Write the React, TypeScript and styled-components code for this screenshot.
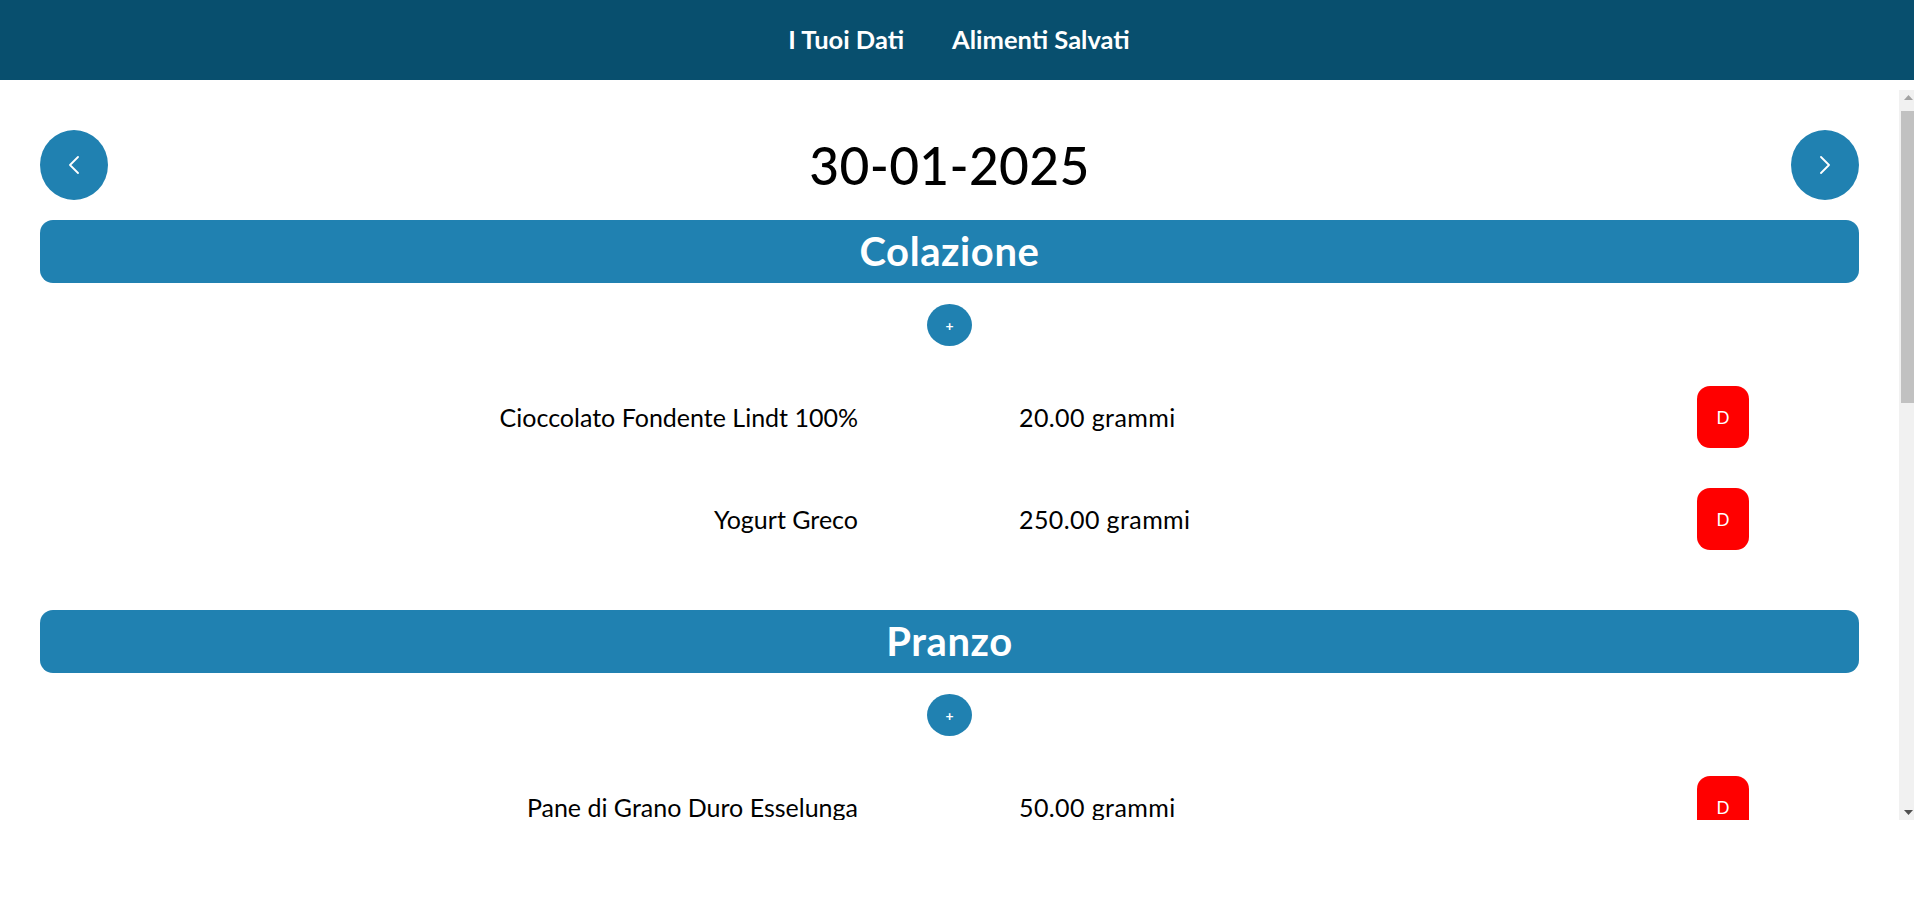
import React from "react";
import styled, { createGlobalStyle } from "styled-components";

const GlobalStyle = createGlobalStyle`
  html, body {
    margin: 0;
    padding: 0;
    background: #ffffff;
    font-family: "Lato", "Open Sans", sans-serif;
    color: #000000;
  }
  * { box-sizing: border-box; }
`;

const Page = styled.div`
  display: flex;
  flex-direction: column;
  width: 100%;
`;

const TopBar = styled.nav`
  height: 80px;
  background: #084f6e;
  display: flex;
  justify-content: center;
  align-items: center;
  gap: 48px;
  padding-left: 4px;
`;

const NavLink = styled.a`
  color: #ffffff;
  font-family: "Lato", sans-serif;
  font-weight: 700;
  font-size: 25.5px;
  text-decoration: none;
  cursor: pointer;
  padding-bottom: 2px;
`;

const Viewport = styled.div`
  margin-top: 10px;
  height: 730px;
  display: flex;
`;

const Scroller = styled.main`
  flex: 1;
  min-width: 0;
  overflow-y: auto;
  padding: 40px 40px 90px;
  scrollbar-width: none;
  &::-webkit-scrollbar {
    display: none;
  }
`;

const ScrollTrack = styled.div`
  width: 15px;
  flex-shrink: 0;
  background: #f1f1f1;
  display: flex;
  flex-direction: column;
`;

const ScrollArrow = styled.div`
  height: 15px;
  display: flex;
  align-items: center;
  justify-content: flex-end;
  padding-right: 1px;
`;

const ScrollThumb = styled.div`
  height: 292px;
  margin-top: 6px;
  margin-left: 2px;
  background: #c1c1c1;
`;

const ScrollSpacer = styled.div`
  flex: 1;
`;

const DateRow = styled.div`
  display: flex;
  align-items: center;
  justify-content: space-between;
  height: 70px;
`;

const RoundNav = styled.button`
  width: 68px;
  height: 70px;
  border-radius: 50%;
  border: none;
  background: #2081b1;
  display: flex;
  align-items: center;
  justify-content: center;
  padding: 0;
  cursor: pointer;
`;

const DateTitle = styled.h1`
  margin: 0;
  font-family: "Lato", sans-serif;
  font-weight: 500;
  font-size: 51.5px;
  letter-spacing: 0.3px;
`;

const Section = styled.section<{ $first?: boolean }>`
  display: flex;
  flex-direction: column;
  align-items: stretch;
  margin-top: ${(p) => (p.$first ? "20px" : "60px")};
`;

const MealBar = styled.div`
  height: 63px;
  border-radius: 13px;
  background: #2081b1;
  color: #ffffff;
  display: flex;
  align-items: center;
  justify-content: center;
  font-family: "Lato", sans-serif;
  font-weight: 700;
  font-size: 40px;
  letter-spacing: 0.6px;
  padding-bottom: 2px;
`;

const AddButton = styled.button`
  align-self: center;
  width: 45px;
  height: 42px;
  margin-top: 21px;
  border-radius: 50%;
  border: none;
  background: #2081b1;
  color: #ffffff;
  font-family: "Lato", sans-serif;
  font-size: 14px;
  font-weight: 700;
  padding: 0;
  cursor: pointer;
`;

const FoodList = styled.div`
  display: flex;
  flex-direction: column;
  gap: 40px;
  margin-top: 40px;
`;

const FoodRow = styled.div`
  display: grid;
  grid-template-columns: 818px 1fr 52px;
  align-items: center;
  padding-right: 110px;
  height: 62px;
  font-family: "Lato", sans-serif;
  font-size: 25px;
`;

const FoodName = styled.span`
  text-align: right;
`;

const FoodQty = styled.span`
  padding-left: 161px;
  letter-spacing: 0.4px;
`;

const DeleteButton = styled.button`
  width: 52px;
  height: 62px;
  border-radius: 13px;
  border: none;
  background: #ff0000;
  color: #ffffff;
  font-family: "Lato", sans-serif;
  font-size: 17px;
  padding: 0;
  cursor: pointer;
`;

const Chevron = ({ dir }: { dir: "left" | "right" }) => (
  <svg width="14" height="18" viewBox="0 0 14 18" fill="none">
    <polyline
      points={dir === "left" ? "11,1 3,9 11,17" : "3,1 11,9 3,17"}
      stroke="#ffffff"
      strokeWidth="1.8"
      strokeLinecap="round"
      strokeLinejoin="round"
    />
  </svg>
);

const Triangle = ({ up }: { up: boolean }) => (
  <svg width="9" height="5" viewBox="0 0 9 5">
    <polygon
      points={up ? "0,5 4.5,0 9,5" : "0,0 4.5,5 9,0"}
      fill={up ? "#a3a3a3" : "#505050"}
    />
  </svg>
);

type Food = { name: string; qty: string };
type Meal = { title: string; foods: Food[] };

const meals: Meal[] = [
  {
    title: "Colazione",
    foods: [
      { name: "Cioccolato Fondente Lindt 100%", qty: "20.00 grammi" },
      { name: "Yogurt Greco", qty: "250.00 grammi" },
    ],
  },
  {
    title: "Pranzo",
    foods: [
      { name: "Pane di Grano Duro Esselunga", qty: "50.00 grammi" },
      { name: "Petto di Pollo", qty: "150.00 grammi" },
      { name: "Olio Extravergine di Oliva", qty: "10.00 grammi" },
    ],
  },
  {
    title: "Cena",
    foods: [
      { name: "Salmone", qty: "120.00 grammi" },
      { name: "Riso Basmati", qty: "80.00 grammi" },
    ],
  },
  {
    title: "Spuntini",
    foods: [{ name: "Mela", qty: "150.00 grammi" }],
  },
];

export default function App() {
  return (
    <Page>
      <GlobalStyle />
      <TopBar>
        <NavLink>I Tuoi Dati</NavLink>
        <NavLink>Alimenti Salvati</NavLink>
      </TopBar>
      <Viewport>
        <Scroller>
          <DateRow>
            <RoundNav aria-label="Giorno precedente">
              <Chevron dir="left" />
            </RoundNav>
            <DateTitle>30-01-2025</DateTitle>
            <RoundNav aria-label="Giorno successivo">
              <Chevron dir="right" />
            </RoundNav>
          </DateRow>
          {meals.map((meal, i) => (
            <Section key={meal.title} $first={i === 0}>
              <MealBar>{meal.title}</MealBar>
              <AddButton>+</AddButton>
              <FoodList>
                {meal.foods.map((f) => (
                  <FoodRow key={f.name}>
                    <FoodName>{f.name}</FoodName>
                    <FoodQty>{f.qty}</FoodQty>
                    <DeleteButton>D</DeleteButton>
                  </FoodRow>
                ))}
              </FoodList>
            </Section>
          ))}
        </Scroller>
        <ScrollTrack aria-hidden="true">
          <ScrollArrow>
            <Triangle up />
          </ScrollArrow>
          <ScrollThumb />
          <ScrollSpacer />
          <ScrollArrow>
            <Triangle up={false} />
          </ScrollArrow>
        </ScrollTrack>
      </Viewport>
    </Page>
  );
}
